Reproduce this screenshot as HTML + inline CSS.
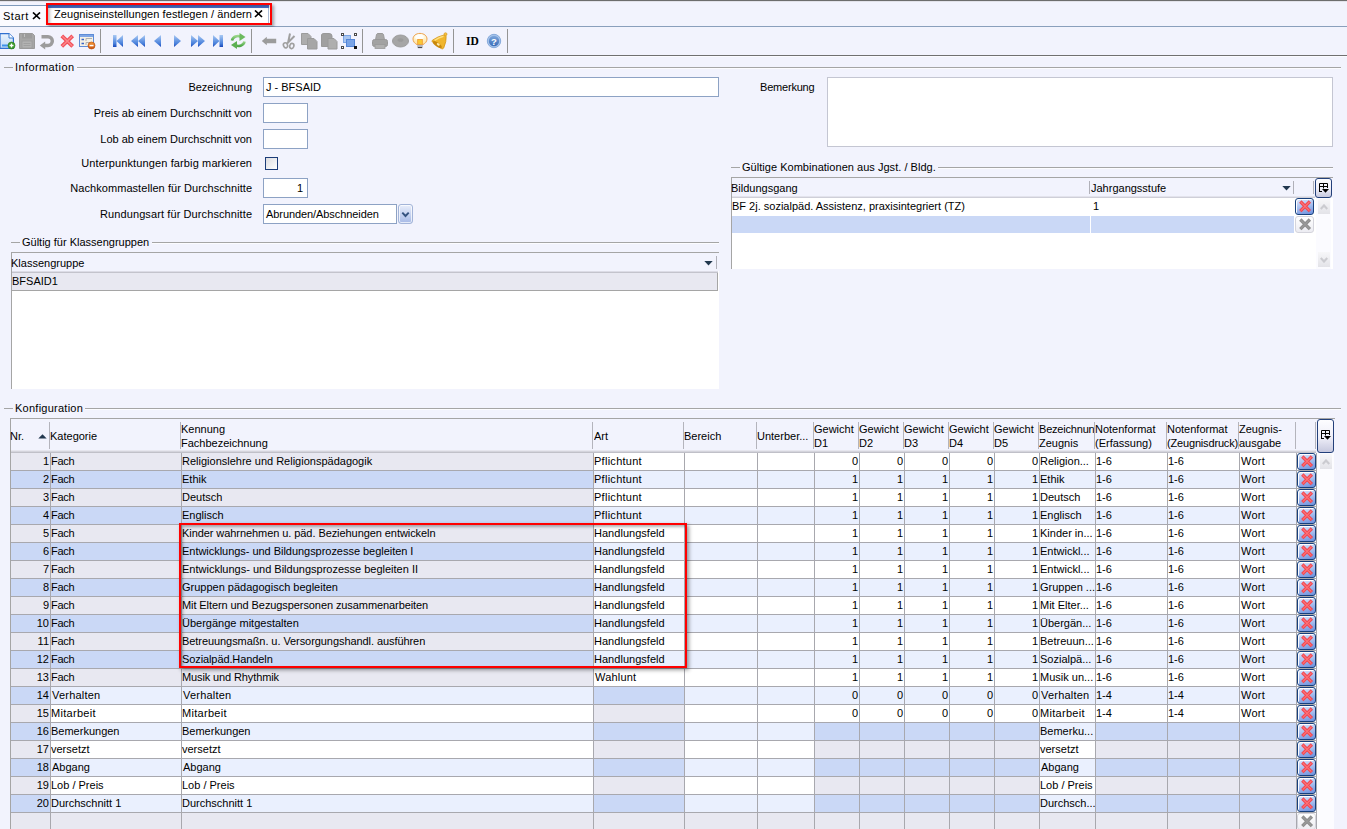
<!DOCTYPE html>
<html lang="de"><head><meta charset="utf-8"><title>Zeugniseinstellungen festlegen / ändern</title><style>
html,body{margin:0;padding:0}
body{width:1347px;height:829px;overflow:hidden;position:relative;background:#f2f3fd;font-family:"Liberation Sans",sans-serif;font-size:11px;color:#000}
.b{position:absolute;display:block}
.t{position:absolute;white-space:nowrap;line-height:13px;height:13px}
</style></head><body>
<div class="b" style="left:0px;top:0px;width:1347px;height:1px;background:#6d6d6d"></div>
<div class="b" style="left:0px;top:1px;width:1347px;height:1px;background:#e2e2ea"></div>
<div class="b" style="left:0px;top:2px;width:1347px;height:24px;background:#f2f3fd"></div>
<div class="b" style="left:0px;top:5px;width:46px;height:1px;background:#7f9abb"></div>
<div class="b" style="left:0px;top:6px;width:46px;height:20px;background:#fbfbff"></div>
<div class="b" style="left:0px;top:26px;width:1347px;height:1px;background:#8a9fbc"></div>
<div class="t " style="left:3px;top:10px;letter-spacing:0.5px;">Start</div>
<svg class="b" style="left:32px;top:12px" width="9" height="8" viewBox="0 0 9 8"><path d="M1 0.5 L8 7 M8 0.5 L1 7" stroke="#000" stroke-width="1.7" fill="none"/></svg>
<div class="b" style="left:48px;top:5px;width:222px;height:18px;background:#fff"></div>
<div class="b" style="left:48px;top:5px;width:221px;height:3px;background:#4a6fcb"></div>
<div class="b" style="left:268px;top:8px;width:1px;height:15px;background:#a9bcd6"></div>
<div class="t " style="left:54px;top:8px;letter-spacing:0.075px;">Zeugniseinstellungen festlegen / ändern</div>
<svg class="b" style="left:254px;top:10px" width="9" height="8" viewBox="0 0 9 8"><path d="M1 0.5 L8 7 M8 0.5 L1 7" stroke="#000" stroke-width="1.7" fill="none"/></svg>
<div class="b" style="left:46px;top:3px;width:226px;height:22px;box-sizing:border-box;border:2px solid #f00;box-shadow:2px 2px 3px rgba(0,0,0,.35), inset 2px 2px 3px rgba(0,0,0,.25)"></div>
<div class="b" style="left:0px;top:27px;width:1347px;height:28px;background:#f2f3fd"></div>
<div class="b" style="left:0px;top:56px;width:1347px;height:1px;background:#fbfbff"></div>
<div class="b" style="left:0px;top:55px;width:1347px;height:1px;background:#707070"></div>
<div class="b" style="left:100px;top:29px;width:1px;height:24px;background:#949494"></div>
<div class="b" style="left:251px;top:29px;width:1px;height:24px;background:#949494"></div>
<div class="b" style="left:362px;top:29px;width:1px;height:24px;background:#949494"></div>
<div class="b" style="left:453px;top:29px;width:1px;height:24px;background:#949494"></div>
<div class="b" style="left:507px;top:29px;width:1px;height:24px;background:#949494"></div>
<svg class="b" style="left:0;top:27px" width="520" height="28" viewBox="0 27 520 28">
<defs>
<linearGradient id="gb" x1="0" y1="0" x2="0" y2="1"><stop offset="0" stop-color="#a9c9f3"/><stop offset="0.7" stop-color="#4a82dc"/><stop offset="1" stop-color="#1a48ba"/></linearGradient>
<linearGradient id="gp" x1="0" y1="0" x2="0" y2="1"><stop offset="0" stop-color="#eaf3fd"/><stop offset="1" stop-color="#bdd8f6"/></linearGradient>
<linearGradient id="gg" x1="0" y1="0" x2="0" y2="1"><stop offset="0" stop-color="#9ad68a"/><stop offset="1" stop-color="#4fa848"/></linearGradient>
<linearGradient id="gy" x1="0" y1="0" x2="0" y2="1"><stop offset="0" stop-color="#fffdf2"/><stop offset="1" stop-color="#ffe49a"/></linearGradient>
<linearGradient id="gh" x1="0" y1="0" x2="0" y2="1"><stop offset="0" stop-color="#7da6dc"/><stop offset="1" stop-color="#3a6cb8"/></linearGradient>
<linearGradient id="go" x1="0" y1="0" x2="0" y2="1"><stop offset="0" stop-color="#f49a3a"/><stop offset="1" stop-color="#c8500c"/></linearGradient>
</defs>
<!-- new doc -->
<path d="M0 33.6 H9 L13.4 38 V48.4 H0 Z" fill="url(#gp)" stroke="#2f70d0" stroke-width="1.2"/>
<path d="M9 33.5 V38 H13.5" fill="#fff" stroke="#3f7fd0" stroke-width="1"/>
<rect x="2" y="44.5" width="7" height="2" fill="#3f93ea"/>
<circle cx="11.5" cy="45.5" r="3.5" fill="#3a9a28" stroke="#2c7a20" stroke-width=".6"/>
<path d="M9.5 45.5 H13.5 M11.5 43.5 V47.5" stroke="#fff" stroke-width="1.3"/>
<!-- save -->
<path d="M19.5 33.5 H32.5 L34.5 35.5 V48.5 H19.5 Z" fill="#a6a6a6" stroke="#9a9a9a" stroke-width="1"/>
<rect x="22" y="33.5" width="10" height="5" fill="#9c9c9c"/>
<rect x="24" y="34" width="1" height="3" fill="#c0c0c0"/>
<rect x="22" y="41" width="10" height="7" fill="#b2b2b2" stroke="#9c9c9c" stroke-width=".8"/>
<path d="M23.5 43.5 H30.5 M23.5 45.5 H30.5" stroke="#a0a0a0" stroke-width="1"/>
<!-- undo -->
<path d="M41.5 36.8 H48 A4.3 4.3 0 0 1 48 45.4 H44.5" fill="none" stroke="#9c9c9c" stroke-width="3.5"/>
<path d="M39.8 45.4 L45.2 41.4 V49.4 Z" fill="#9c9c9c"/>
<!-- delete X -->
<path d="M61.8 35.8 L72.7 46.4 M72.7 35.8 L61.8 46.4" stroke="#f2505a" stroke-width="3.8" fill="none"/>
<path d="M62.3 36.3 L72.2 45.9 M72.2 36.3 L62.3 45.9" stroke="#ff9c9c" stroke-width="1.4" fill="none" opacity=".7"/>
<!-- form icon -->
<rect x="79.5" y="34.5" width="14" height="12" fill="#f4f1e6" stroke="#5e8cd6" stroke-width="1"/>
<rect x="80" y="35" width="13" height="2" fill="#7fa6e6"/>
<path d="M81.500 39.500 H84 M81.500 43.500 H84" stroke="#3a66c8" stroke-width="1.4"/>
<path d="M86 41 V38.500 H92 M86 45 V42.500 H90" stroke="#b0b0b0" stroke-width="1" fill="none"/>
<circle cx="91.500" cy="45.500" r="3.500" fill="url(#go)" stroke="#b84a08" stroke-width=".6"/>
<rect x="89.500" y="44.800" width="4" height="1.500" fill="#fff"/>
<!-- first -->
<rect x="113" y="35" width="3.500" height="12" fill="url(#gb)"/>
<path d="M123 35 V47 L116.500 41 Z" fill="url(#gb)"/>
<!-- prev prev -->
<path d="M138 35 V47 L131 41 Z M145 35 V47 L138 41 Z" fill="url(#gb)"/>
<!-- prev -->
<path d="M161 35 V47 L154 41 Z" fill="url(#gb)"/>
<!-- next -->
<path d="M174 35 V47 L181 41 Z" fill="url(#gb)"/>
<!-- next next -->
<path d="M191 35 V47 L198 41 Z M198 35 V47 L205 41 Z" fill="url(#gb)"/>
<!-- last -->
<path d="M213 35 V47 L219.500 41 Z" fill="url(#gb)"/>
<rect x="219.500" y="35" width="3.500" height="12" fill="url(#gb)"/>
<!-- refresh -->
<path d="M232 40.500 A6 5.500 0 0 1 241 36.800" fill="none" stroke="url(#gg)" stroke-width="2.600"/>
<path d="M239.500 33 L245.500 37 L239.500 41 Z" fill="#6cba5e"/>
<path d="M244.500 41.500 A6 5.500 0 0 1 235.500 45.200" fill="none" stroke="url(#gg)" stroke-width="2.600"/>
<path d="M237 41 L231 45 L237 49 Z" fill="#5cb052"/>
<!-- arrow left -->
<path d="M261.8 41 L266.8 36.8 V38.8 H276.2 V43.2 H266.8 V45.2 Z" fill="#9c9c9c"/>
<!-- scissors -->
<path d="M290 33.500 L288 43 M294.500 36 L287 43.500" stroke="#a0a0a0" stroke-width="2" fill="none"/>
<ellipse cx="285.500" cy="45.300" rx="2" ry="2.600" fill="none" stroke="#a0a0a0" stroke-width="1.600" transform="rotate(-25 285.5 45.3)"/>
<ellipse cx="291.800" cy="46" rx="2" ry="2.600" fill="none" stroke="#a0a0a0" stroke-width="1.600" transform="rotate(20 291.8 46)"/>
<!-- copy -->
<path d="M301.500 33.500 H308 L311 36.500 V44.500 H301.500 Z" fill="#adadad" stroke="#9c9c9c" stroke-width="1"/>
<path d="M307.500 38.500 H314 L317 41.500 V49 H307.500 Z" fill="#a6a6a6" stroke="#9a9a9a" stroke-width="1"/>
<!-- paste -->
<path d="M321.500 35 Q321.500 33.500 324 33.500 H329 Q332 33.500 332 36 V46.500 H321.500 Z" fill="#a0a0a0" stroke="#999" stroke-width="1"/>
<path d="M328 38.500 H334 L337 41.500 V49 H328 Z" fill="#aeaeae" stroke="#9a9a9a" stroke-width="1"/>
<!-- select -->
<rect x="343.500" y="35.500" width="7" height="7" fill="#a9c6f0" stroke="#7aa4e4" stroke-width="1"/>
<rect x="346.500" y="39.500" width="8" height="7" fill="#7aa4e6" stroke="#5586d8" stroke-width="1"/>
<rect x="341.500" y="33.500" width="2" height="2" fill="#fff" stroke="#4a4a4a" stroke-width="1"/>
<rect x="354.500" y="33.500" width="2" height="2" fill="#fff" stroke="#4a4a4a" stroke-width="1"/>
<rect x="341.500" y="46.500" width="2" height="2" fill="#fff" stroke="#4a4a4a" stroke-width="1"/>
<rect x="354.500" y="46.500" width="2" height="2" fill="#111" stroke="#111" stroke-width="1"/>
<!-- print -->
<path d="M375.500 40 L376.500 34.500 Q377 33.500 378 33.500 H382 Q383 33.500 383.500 34.500 L384.500 40 Z" fill="#a8a8a8" stroke="#9a9a9a" stroke-width="1"/>
<rect x="372.500" y="39.500" width="15" height="7" rx="2" fill="#a2a2a2" stroke="#989898" stroke-width="1"/>
<rect x="375" y="44.500" width="10" height="4" fill="#b0b0b0" stroke="#9a9a9a" stroke-width=".8"/>
<!-- oval -->
<ellipse cx="400.500" cy="41" rx="8" ry="6" fill="#a6a6a6" stroke="#9c9c9c" stroke-width="1"/>
<ellipse cx="400.500" cy="40" rx="3" ry="1.800" fill="#9a9a9a"/>
<!-- bulb -->
<path d="M420 33.4 C424.2 33.4 427 36 427 39 C427 41.600 425.200 43.400 423 44.600 H417 C414.800 43.400 413 41.600 413 39 C413 36 415.800 33.400 420 33.400 Z" fill="url(#gy)" stroke="#eea24c" stroke-width="1"/>
<ellipse cx="419.500" cy="37.200" rx="4.200" ry="2.600" fill="#ffffff" opacity=".85"/>
<rect x="417.700" y="39.500" width="4.600" height="5" fill="#fac832" stroke="#f0982c" stroke-width=".8"/>
<rect x="417.200" y="44.800" width="5.600" height="2.400" fill="#b4b8c0"/>
<rect x="417.800" y="47" width="4.400" height="1.100" fill="#4a4a4a"/>
<!-- bell -->
<path d="M444.3 34.9 Q438 36.2 432.4 40.2 Q431.5 41.2 432.5 42.1 L441.4 48.6 Q442.8 49.4 443.7 48 Q446.6 41 446.1 36.6 Q445.6 35 444.3 34.9 Z" fill="#f0b62e" stroke="#d49414" stroke-width=".8"/>
<path d="M443.5 36.2 Q439 37.3 434.6 40.4" stroke="#ffe38a" stroke-width="1.400" fill="none" opacity=".9"/>
<ellipse cx="437.300" cy="44.600" rx="5.300" ry="1.900" fill="#c8880c" transform="rotate(36 437.3 44.6)"/>
<ellipse cx="438.300" cy="44.300" rx="1.700" ry="1.100" fill="#ffe9a6" transform="rotate(36 438.3 44.3)"/>
<circle cx="445.500" cy="34.200" r="1.500" fill="#f4c040" stroke="#d49414" stroke-width=".6"/>
<!-- ID -->
<text x="466" y="45" font-family="Liberation Serif, serif" font-weight="bold" font-size="11.500" fill="#000">ID</text>
<!-- help -->
<circle cx="494" cy="41" r="6.700" fill="#a9c5ea" stroke="#86aadc" stroke-width="1"/><circle cx="494" cy="41" r="5.200" fill="url(#gh)"/>
<text x="494" y="44.500" text-anchor="middle" font-family="Liberation Sans, sans-serif" font-weight="bold" font-size="9.500" fill="#fff">?</text>
</svg>

<div class="b" style="left:4px;top:67px;width:9px;height:1px;background:#a5a5a5"></div>
<div class="b" style="left:77px;top:67px;width:1264px;height:1px;background:#a5a5a5"></div>
<div class="b" style="left:77px;top:68px;width:1264px;height:1px;background:#fcfcff"></div>
<div class="t " style="left:15px;top:61px;letter-spacing:0.4px;">Information</div>
<div class="b" style="left:11px;top:242px;width:9px;height:1px;background:#a5a5a5"></div>
<div class="b" style="left:152px;top:242px;width:567px;height:1px;background:#a5a5a5"></div>
<div class="b" style="left:152px;top:243px;width:567px;height:1px;background:#fcfcff"></div>
<div class="t " style="left:22px;top:236px;">Gültig für Klassengruppen</div>
<div class="b" style="left:731px;top:167px;width:9px;height:1px;background:#a5a5a5"></div>
<div class="b" style="left:938px;top:167px;width:395px;height:1px;background:#a5a5a5"></div>
<div class="b" style="left:938px;top:168px;width:395px;height:1px;background:#fcfcff"></div>
<div class="t " style="left:742px;top:161px;letter-spacing:0.03px;">Gültige Kombinationen aus Jgst. / Bldg.</div>
<div class="b" style="left:4px;top:408px;width:9px;height:1px;background:#a5a5a5"></div>
<div class="b" style="left:85px;top:408px;width:1256px;height:1px;background:#a5a5a5"></div>
<div class="b" style="left:85px;top:409px;width:1256px;height:1px;background:#fcfcff"></div>
<div class="t " style="left:15px;top:402px;letter-spacing:0.25px;">Konfiguration</div>
<div class="t " style="right:1095px;top:81px;">Bezeichnung</div>
<div class="t " style="right:1095px;top:107px;">Preis ab einem Durchschnitt von</div>
<div class="t " style="right:1095px;top:133px;">Lob ab einem Durchschnitt von</div>
<div class="t " style="right:1094.875px;top:157px;letter-spacing:0.125px;">Unterpunktungen farbig markieren</div>
<div class="t " style="right:1094.94px;top:182px;letter-spacing:0.06px;">Nachkommastellen für Durchschnitte</div>
<div class="t " style="right:1094.9px;top:208px;letter-spacing:0.1px;">Rundungsart für Durchschnitte</div>
<div class="b" style="left:263px;top:77px;width:456px;height:20px;box-sizing:border-box;border:1px solid #8da2c4;background:#fff"></div>
<div class="t " style="left:266px;top:81px;">J - BFSAID</div>
<div class="b" style="left:263px;top:103px;width:45px;height:20px;box-sizing:border-box;border:1px solid #8da2c4;background:#fff"></div>
<div class="b" style="left:263px;top:129px;width:45px;height:20px;box-sizing:border-box;border:1px solid #8da2c4;background:#fff"></div>
<div class="b" style="left:265px;top:157px;width:13px;height:13px;box-sizing:border-box;border:1px solid #1c3c78;background:linear-gradient(135deg,#dcdce0,#ffffff)"></div>
<div class="b" style="left:263px;top:178px;width:45px;height:20px;box-sizing:border-box;border:1px solid #8da2c4;background:#fff"></div>
<div class="t " style="right:1044px;top:182px;">1</div>
<div class="b" style="left:263px;top:204px;width:134px;height:20px;box-sizing:border-box;border:1px solid #8da2c4;background:#fff"></div>
<div class="t " style="left:266px;top:208px;letter-spacing:-0.08px;">Abrunden/Abschneiden</div>
<div class="b" style="left:398px;top:204px;width:15px;height:20px;box-sizing:border-box;border:1px solid #a3b4d8;border-radius:3px;box-shadow:inset 0 0 0 1px rgba(255,255,255,.7);background:linear-gradient(#e9eefb,#a6b9e6)"></div>
<svg class="b" style="left:401px;top:211px" width="9" height="7" viewBox="0 0 9 7"><path d="M1.3 1.6 L4.5 5 L7.7 1.6" stroke="#34527f" stroke-width="1.9" fill="none"/></svg>
<div class="t " style="left:760px;top:81px;letter-spacing:-0.2px;">Bemerkung</div>
<div class="b" style="left:827px;top:77px;width:506px;height:70px;box-sizing:border-box;border:1px solid #c4c6d2;background:#fff"></div>
<div class="b" style="left:11px;top:252px;width:708px;height:137px;background:#fff"></div>
<div class="b" style="left:11px;top:252px;width:708px;height:1px;background:#a5a5a5"></div>
<div class="b" style="left:11px;top:253px;width:1px;height:136px;background:#a5a5a5"></div>
<div class="b" style="left:12px;top:253px;width:707px;height:18px;background:#f2f3fd"></div>
<div class="b" style="left:12px;top:271px;width:706px;height:1px;background:#dcdce6"></div>
<div class="b" style="left:12px;top:272px;width:706px;height:1px;background:#c3c3cc"></div>
<div class="b" style="left:12px;top:273px;width:706px;height:17px;background:#e8e8f1"></div>
<div class="b" style="left:12px;top:290px;width:706px;height:1px;background:#a5a5a5"></div>
<div class="b" style="left:717px;top:273px;width:1px;height:18px;background:#a5a5a5"></div>
<div class="b" style="left:716px;top:256px;width:1px;height:13px;background:#b0b0b8"></div>
<div class="t " style="left:11px;top:257px;">Klassengruppe</div>
<div class="t " style="left:12px;top:275px;">BFSAID1</div>
<svg class="b" style="left:704px;top:261px" width="9" height="5" viewBox="0 0 9 5"><path d="M0.3 0 H8.7 L4.5 4.4 Z" fill="#22384f"/></svg>
<div class="b" style="left:731px;top:177px;width:602px;height:92px;background:#fff"></div>
<div class="b" style="left:731px;top:177px;width:602px;height:1px;background:#a5a5a5"></div>
<div class="b" style="left:731px;top:178px;width:1px;height:91px;background:#a5a5a5"></div>
<div class="b" style="left:732px;top:178px;width:583px;height:19px;background:#f2f3fd"></div>
<div class="b" style="left:732px;top:196px;width:583px;height:1px;background:#e3e3ec"></div>
<div class="b" style="left:732px;top:197px;width:583px;height:1px;background:#cfcfd8"></div>
<div class="b" style="left:1315px;top:178px;width:18px;height:20px;background:#f2f3fd"></div>
<div class="t " style="left:731px;top:182px;">Bildungsgang</div>
<div class="t " style="left:1091px;top:182px;">Jahrgangsstufe</div>
<div class="b" style="left:1089px;top:181px;width:1px;height:13px;background:#b0b0b8"></div>
<div class="b" style="left:1293px;top:181px;width:1px;height:13px;background:#b0b0b8"></div>
<div class="b" style="left:1313px;top:181px;width:1px;height:13px;background:#b0b0b8"></div>
<svg class="b" style="left:1282px;top:186px" width="9" height="5" viewBox="0 0 9 5"><path d="M0.3 0 H8.7 L4.5 4.4 Z" fill="#22384f"/></svg>
<div class="t " style="left:732px;top:200px;">BF 2j. sozialpäd. Assistenz, praxisintegriert (TZ)</div>
<div class="t " style="left:1093px;top:200px;">1</div>
<div class="b" style="left:732px;top:216px;width:358px;height:17px;background:#cad8f6"></div>
<div class="b" style="left:1091px;top:216px;width:203px;height:17px;background:#cad8f6"></div>
<div class="b" style="left:1316px;top:198px;width:15px;height:71px;background:#fbfbff"></div>
<div class="b" style="left:1318px;top:199px;width:12px;height:15px;background:linear-gradient(#f7f7f9,#e3e3e8)"></div>
<div class="b" style="left:1318px;top:252px;width:12px;height:15px;background:linear-gradient(#f7f7f9,#e3e3e8)"></div>
<svg class="b" style="left:1320px;top:204px" width="8" height="6" viewBox="0 0 8 6"><path d="M0.7 5 L4 1.5 L7.3 5" stroke="#cbcbd0" stroke-width="2.2" fill="none"/></svg>
<svg class="b" style="left:1320px;top:257px" width="8" height="6" viewBox="0 0 8 6"><path d="M0.7 1 L4 4.5 L7.3 1" stroke="#cbcbd0" stroke-width="2.2" fill="none"/></svg>
<div class="b" style="left:1315px;top:178px;width:17px;height:20px;box-sizing:border-box;border:1px solid #23407a;border-radius:3px;background:linear-gradient(#fdfdff,#eeeef8 55%,#c6c8de)"></div>
<svg class="b" style="left:1319px;top:183px" width="10" height="10" viewBox="0 0 10 10"><path d="M0.5 9 V0.5 H8.5 V5 M0.5 3.5 H8.5 M4.5 0.5 V5.5 M0.5 8.5 H3" stroke="#000" stroke-width="1" fill="none"/><path d="M3 6 H10 L6.5 9.8 Z" fill="#000"/></svg>
<div class="b" style="left:1295px;top:198px;width:19px;height:17px;box-sizing:border-box;border:1px solid #17407c;border-radius:3px;box-shadow:inset 1px 1px 0 rgba(255,255,255,.95);background:linear-gradient(165deg,#dfe8fc,#adc3f0 45%,#6a8edb)"></div>
<svg class="b" style="left:1298px;top:199px" width="14" height="14" viewBox="0 0 14 14"><path d="M2.3 2.5 L11.9 12.1 M11.9 2.5 L2.3 12.1" stroke="#f4454f" stroke-width="3.3" fill="none"/><path d="M2.8 3 L11.4 11.6 M11.4 3 L2.8 11.6" stroke="#ff9a9a" stroke-width="1.1" fill="none" opacity=".55"/></svg>
<div class="b" style="left:1295px;top:216px;width:19px;height:17px;box-sizing:border-box;border:1px solid #d4d4dc;border-radius:3px;background:linear-gradient(#ffffff,#ececf2)"></div>
<svg class="b" style="left:1298px;top:217px" width="14" height="14" viewBox="0 0 14 14"><path d="M2.3 2.5 L11.9 12.1 M11.9 2.5 L2.3 12.1" stroke="#8e8e8e" stroke-width="3.3" fill="none"/><path d="M2.8 3 L11.4 11.6 M11.4 3 L2.8 11.6" stroke="#a4a4a4" stroke-width="1.1" fill="none" opacity=".55"/></svg>
<div class="b" style="left:10px;top:418px;width:1325px;height:1px;background:#a5a5a5"></div>
<div class="b" style="left:10px;top:419px;width:1px;height:410px;background:#a5a5a5"></div>
<div class="b" style="left:11px;top:419px;width:1305px;height:31px;background:#f2f3fd"></div>
<div class="b" style="left:11px;top:450px;width:1305px;height:1px;background:#e6e6ee"></div>
<div class="b" style="left:11px;top:451px;width:1305px;height:1px;background:#d4d4dc"></div>
<div class="b" style="left:11px;top:452px;width:1305px;height:1px;background:#c0c0c8"></div>
<div class="b" style="left:1317px;top:453px;width:17px;height:376px;background:#fcfcff"></div>
<div class="b" style="left:1320px;top:454px;width:12px;height:15px;background:linear-gradient(#f7f7f9,#e3e3e8)"></div>
<svg class="b" style="left:1322px;top:459px" width="8" height="6" viewBox="0 0 8 6"><path d="M0.7 5 L4 1.5 L7.3 5" stroke="#cbcbd0" stroke-width="2.2" fill="none"/></svg>
<div class="b" style="left:1317px;top:419px;width:17px;height:34px;box-sizing:border-box;border:1px solid #23407a;border-radius:3px;background:linear-gradient(#fdfdff,#eeeef8 55%,#c6c8de)"></div>
<svg class="b" style="left:1321px;top:430px" width="10" height="10" viewBox="0 0 10 10"><path d="M0.5 9 V0.5 H8.5 V5 M0.5 3.5 H8.5 M4.5 0.5 V5.5 M0.5 8.5 H3" stroke="#000" stroke-width="1" fill="none"/><path d="M3 6 H10 L6.5 9.8 Z" fill="#000"/></svg>
<div class="t" style="left:10px;top:430px;width:39px;overflow:hidden">Nr.</div>
<div class="b" style="left:49px;top:422px;width:1px;height:27px;background:#b4b4bc"></div>
<div class="t" style="left:50px;top:430px;width:130px;overflow:hidden">Kategorie</div>
<div class="b" style="left:180px;top:422px;width:1px;height:27px;background:#b4b4bc"></div>
<div class="t" style="left:181px;top:422px;width:411px;height:28px;overflow:hidden;line-height:14px">Kennung<br>Fachbezeichnung</div>
<div class="b" style="left:592px;top:422px;width:1px;height:27px;background:#b4b4bc"></div>
<div class="t" style="left:594px;top:430px;width:90px;overflow:hidden">Art</div>
<div class="b" style="left:683px;top:422px;width:1px;height:27px;background:#b4b4bc"></div>
<div class="t" style="left:684px;top:430px;width:72px;overflow:hidden">Bereich</div>
<div class="b" style="left:756px;top:422px;width:1px;height:27px;background:#b4b4bc"></div>
<div class="t" style="left:757px;top:430px;width:56px;overflow:hidden">Unterber...</div>
<div class="b" style="left:813px;top:422px;width:1px;height:27px;background:#b4b4bc"></div>
<div class="t" style="left:814px;top:422px;width:44px;height:28px;overflow:hidden;line-height:14px">Gewicht<br>D1</div>
<div class="b" style="left:858px;top:422px;width:1px;height:27px;background:#b4b4bc"></div>
<div class="t" style="left:859px;top:422px;width:44px;height:28px;overflow:hidden;line-height:14px">Gewicht<br>D2</div>
<div class="b" style="left:903px;top:422px;width:1px;height:27px;background:#b4b4bc"></div>
<div class="t" style="left:904px;top:422px;width:44px;height:28px;overflow:hidden;line-height:14px">Gewicht<br>D3</div>
<div class="b" style="left:948px;top:422px;width:1px;height:27px;background:#b4b4bc"></div>
<div class="t" style="left:949px;top:422px;width:44px;height:28px;overflow:hidden;line-height:14px">Gewicht<br>D4</div>
<div class="b" style="left:993px;top:422px;width:1px;height:27px;background:#b4b4bc"></div>
<div class="t" style="left:994px;top:422px;width:44px;height:28px;overflow:hidden;line-height:14px">Gewicht<br>D5</div>
<div class="b" style="left:1038px;top:422px;width:1px;height:27px;background:#b4b4bc"></div>
<div class="t" style="left:1039px;top:422px;width:55px;height:28px;overflow:hidden;line-height:14px"><span style="letter-spacing:-0.2px">Bezeichnung</span><br>Zeugnis</div>
<div class="b" style="left:1094px;top:422px;width:1px;height:27px;background:#b4b4bc"></div>
<div class="t" style="left:1095px;top:422px;width:71px;height:28px;overflow:hidden;line-height:14px">Notenformat<br>(Erfassung)</div>
<div class="b" style="left:1166px;top:422px;width:1px;height:27px;background:#b4b4bc"></div>
<div class="t" style="left:1167px;top:422px;width:71px;height:28px;overflow:hidden;line-height:14px">Notenformat<br><span style="letter-spacing:-0.17px">(Zeugnisdruck)</span></div>
<div class="b" style="left:1238px;top:422px;width:1px;height:27px;background:#b4b4bc"></div>
<div class="t" style="left:1239px;top:422px;width:56px;height:28px;overflow:hidden;line-height:14px">Zeugnis-<br>ausgabe</div>
<div class="b" style="left:1295px;top:422px;width:1px;height:27px;background:#b4b4bc"></div>
<div class="b" style="left:1315px;top:422px;width:1px;height:27px;background:#b4b4bc"></div>
<svg class="b" style="left:38px;top:434px" width="9" height="5" viewBox="0 0 9 5"><path d="M0.3 4.6 H8.7 L4.5 0.2 Z" fill="#22384f"/></svg>
<div class="b" style="left:11px;top:453px;width:39px;height:17px;background:#e8e8f1"></div>
<div class="t " style="right:1298px;top:455px;">1</div>
<div class="b" style="left:51px;top:453px;width:130px;height:17px;background:#e8e8f1"></div>
<div class="t " style="left:51px;top:455px;letter-spacing:-0.25px;">Fach</div>
<div class="b" style="left:182px;top:453px;width:411px;height:17px;background:#e8e8f1"></div>
<div class="t " style="left:182px;top:455px;">Religionslehre und Religionspädagogik</div>
<div class="b" style="left:594px;top:453px;width:90px;height:17px;background:#ffffff"></div>
<div class="t " style="left:594px;top:455px;letter-spacing:0.27px;">Pflichtunt</div>
<div class="b" style="left:685px;top:453px;width:72px;height:17px;background:#ffffff"></div>
<div class="b" style="left:758px;top:453px;width:56px;height:17px;background:#ffffff"></div>
<div class="b" style="left:815px;top:453px;width:44px;height:17px;background:#ffffff"></div>
<div class="t " style="right:489px;top:455px;">0</div>
<div class="b" style="left:860px;top:453px;width:44px;height:17px;background:#ffffff"></div>
<div class="t " style="right:444px;top:455px;">0</div>
<div class="b" style="left:905px;top:453px;width:44px;height:17px;background:#ffffff"></div>
<div class="t " style="right:399px;top:455px;">0</div>
<div class="b" style="left:950px;top:453px;width:44px;height:17px;background:#ffffff"></div>
<div class="t " style="right:354px;top:455px;">0</div>
<div class="b" style="left:995px;top:453px;width:44px;height:17px;background:#ffffff"></div>
<div class="t " style="right:309px;top:455px;">0</div>
<div class="b" style="left:1040px;top:453px;width:55px;height:17px;background:#ffffff"></div>
<div class="t " style="left:1040px;top:455px;">Religion...</div>
<div class="b" style="left:1096px;top:453px;width:71px;height:17px;background:#ffffff"></div>
<div class="t " style="left:1096px;top:455px;">1-6</div>
<div class="b" style="left:1168px;top:453px;width:71px;height:17px;background:#ffffff"></div>
<div class="t " style="left:1168px;top:455px;">1-6</div>
<div class="b" style="left:1240px;top:453px;width:56px;height:17px;background:#ffffff"></div>
<div class="t " style="left:1241px;top:455px;letter-spacing:0.25px;">Wort</div>
<div class="b" style="left:1297px;top:453px;width:19px;height:17px;background:#fff"></div>
<div class="b" style="left:11px;top:470px;width:1306px;height:1px;background:#a8a8ae"></div>
<div class="b" style="left:1297px;top:453px;width:19px;height:17px;box-sizing:border-box;border:1px solid #17407c;border-radius:3px;box-shadow:inset 1px 1px 0 rgba(255,255,255,.95);background:linear-gradient(165deg,#dfe8fc,#adc3f0 45%,#6a8edb)"></div>
<svg class="b" style="left:1300px;top:454px" width="14" height="14" viewBox="0 0 14 14"><path d="M2.3 2.5 L11.9 12.1 M11.9 2.5 L2.3 12.1" stroke="#f4454f" stroke-width="3.3" fill="none"/><path d="M2.8 3 L11.4 11.6 M11.4 3 L2.8 11.6" stroke="#ff9a9a" stroke-width="1.1" fill="none" opacity=".55"/></svg>
<div class="b" style="left:11px;top:471px;width:39px;height:17px;background:#cad8f6"></div>
<div class="t " style="right:1298px;top:473px;">2</div>
<div class="b" style="left:51px;top:471px;width:130px;height:17px;background:#cad8f6"></div>
<div class="t " style="left:51px;top:473px;letter-spacing:-0.25px;">Fach</div>
<div class="b" style="left:182px;top:471px;width:411px;height:17px;background:#cad8f6"></div>
<div class="t " style="left:182px;top:473px;">Ethik</div>
<div class="b" style="left:594px;top:471px;width:90px;height:17px;background:#eaf0fe"></div>
<div class="t " style="left:594px;top:473px;letter-spacing:0.27px;">Pflichtunt</div>
<div class="b" style="left:685px;top:471px;width:72px;height:17px;background:#eaf0fe"></div>
<div class="b" style="left:758px;top:471px;width:56px;height:17px;background:#eaf0fe"></div>
<div class="b" style="left:815px;top:471px;width:44px;height:17px;background:#eaf0fe"></div>
<div class="t " style="right:489px;top:473px;">1</div>
<div class="b" style="left:860px;top:471px;width:44px;height:17px;background:#eaf0fe"></div>
<div class="t " style="right:444px;top:473px;">1</div>
<div class="b" style="left:905px;top:471px;width:44px;height:17px;background:#eaf0fe"></div>
<div class="t " style="right:399px;top:473px;">1</div>
<div class="b" style="left:950px;top:471px;width:44px;height:17px;background:#eaf0fe"></div>
<div class="t " style="right:354px;top:473px;">1</div>
<div class="b" style="left:995px;top:471px;width:44px;height:17px;background:#eaf0fe"></div>
<div class="t " style="right:309px;top:473px;">1</div>
<div class="b" style="left:1040px;top:471px;width:55px;height:17px;background:#eaf0fe"></div>
<div class="t " style="left:1040px;top:473px;">Ethik</div>
<div class="b" style="left:1096px;top:471px;width:71px;height:17px;background:#eaf0fe"></div>
<div class="t " style="left:1096px;top:473px;">1-6</div>
<div class="b" style="left:1168px;top:471px;width:71px;height:17px;background:#eaf0fe"></div>
<div class="t " style="left:1168px;top:473px;">1-6</div>
<div class="b" style="left:1240px;top:471px;width:56px;height:17px;background:#eaf0fe"></div>
<div class="t " style="left:1241px;top:473px;letter-spacing:0.25px;">Wort</div>
<div class="b" style="left:1297px;top:471px;width:19px;height:17px;background:#fff"></div>
<div class="b" style="left:11px;top:488px;width:1306px;height:1px;background:#a8a8ae"></div>
<div class="b" style="left:1297px;top:471px;width:19px;height:17px;box-sizing:border-box;border:1px solid #17407c;border-radius:3px;box-shadow:inset 1px 1px 0 rgba(255,255,255,.95);background:linear-gradient(165deg,#dfe8fc,#adc3f0 45%,#6a8edb)"></div>
<svg class="b" style="left:1300px;top:472px" width="14" height="14" viewBox="0 0 14 14"><path d="M2.3 2.5 L11.9 12.1 M11.9 2.5 L2.3 12.1" stroke="#f4454f" stroke-width="3.3" fill="none"/><path d="M2.8 3 L11.4 11.6 M11.4 3 L2.8 11.6" stroke="#ff9a9a" stroke-width="1.1" fill="none" opacity=".55"/></svg>
<div class="b" style="left:11px;top:489px;width:39px;height:17px;background:#e8e8f1"></div>
<div class="t " style="right:1298px;top:491px;">3</div>
<div class="b" style="left:51px;top:489px;width:130px;height:17px;background:#e8e8f1"></div>
<div class="t " style="left:51px;top:491px;letter-spacing:-0.25px;">Fach</div>
<div class="b" style="left:182px;top:489px;width:411px;height:17px;background:#e8e8f1"></div>
<div class="t " style="left:182px;top:491px;">Deutsch</div>
<div class="b" style="left:594px;top:489px;width:90px;height:17px;background:#ffffff"></div>
<div class="t " style="left:594px;top:491px;letter-spacing:0.27px;">Pflichtunt</div>
<div class="b" style="left:685px;top:489px;width:72px;height:17px;background:#ffffff"></div>
<div class="b" style="left:758px;top:489px;width:56px;height:17px;background:#ffffff"></div>
<div class="b" style="left:815px;top:489px;width:44px;height:17px;background:#ffffff"></div>
<div class="t " style="right:489px;top:491px;">1</div>
<div class="b" style="left:860px;top:489px;width:44px;height:17px;background:#ffffff"></div>
<div class="t " style="right:444px;top:491px;">1</div>
<div class="b" style="left:905px;top:489px;width:44px;height:17px;background:#ffffff"></div>
<div class="t " style="right:399px;top:491px;">1</div>
<div class="b" style="left:950px;top:489px;width:44px;height:17px;background:#ffffff"></div>
<div class="t " style="right:354px;top:491px;">1</div>
<div class="b" style="left:995px;top:489px;width:44px;height:17px;background:#ffffff"></div>
<div class="t " style="right:309px;top:491px;">1</div>
<div class="b" style="left:1040px;top:489px;width:55px;height:17px;background:#ffffff"></div>
<div class="t " style="left:1040px;top:491px;">Deutsch</div>
<div class="b" style="left:1096px;top:489px;width:71px;height:17px;background:#ffffff"></div>
<div class="t " style="left:1096px;top:491px;">1-6</div>
<div class="b" style="left:1168px;top:489px;width:71px;height:17px;background:#ffffff"></div>
<div class="t " style="left:1168px;top:491px;">1-6</div>
<div class="b" style="left:1240px;top:489px;width:56px;height:17px;background:#ffffff"></div>
<div class="t " style="left:1241px;top:491px;letter-spacing:0.25px;">Wort</div>
<div class="b" style="left:1297px;top:489px;width:19px;height:17px;background:#fff"></div>
<div class="b" style="left:11px;top:506px;width:1306px;height:1px;background:#a8a8ae"></div>
<div class="b" style="left:1297px;top:489px;width:19px;height:17px;box-sizing:border-box;border:1px solid #17407c;border-radius:3px;box-shadow:inset 1px 1px 0 rgba(255,255,255,.95);background:linear-gradient(165deg,#dfe8fc,#adc3f0 45%,#6a8edb)"></div>
<svg class="b" style="left:1300px;top:490px" width="14" height="14" viewBox="0 0 14 14"><path d="M2.3 2.5 L11.9 12.1 M11.9 2.5 L2.3 12.1" stroke="#f4454f" stroke-width="3.3" fill="none"/><path d="M2.8 3 L11.4 11.6 M11.4 3 L2.8 11.6" stroke="#ff9a9a" stroke-width="1.1" fill="none" opacity=".55"/></svg>
<div class="b" style="left:11px;top:507px;width:39px;height:17px;background:#cad8f6"></div>
<div class="t " style="right:1298px;top:509px;">4</div>
<div class="b" style="left:51px;top:507px;width:130px;height:17px;background:#cad8f6"></div>
<div class="t " style="left:51px;top:509px;letter-spacing:-0.25px;">Fach</div>
<div class="b" style="left:182px;top:507px;width:411px;height:17px;background:#cad8f6"></div>
<div class="t " style="left:182px;top:509px;">Englisch</div>
<div class="b" style="left:594px;top:507px;width:90px;height:17px;background:#eaf0fe"></div>
<div class="t " style="left:594px;top:509px;letter-spacing:0.27px;">Pflichtunt</div>
<div class="b" style="left:685px;top:507px;width:72px;height:17px;background:#eaf0fe"></div>
<div class="b" style="left:758px;top:507px;width:56px;height:17px;background:#eaf0fe"></div>
<div class="b" style="left:815px;top:507px;width:44px;height:17px;background:#eaf0fe"></div>
<div class="t " style="right:489px;top:509px;">1</div>
<div class="b" style="left:860px;top:507px;width:44px;height:17px;background:#eaf0fe"></div>
<div class="t " style="right:444px;top:509px;">1</div>
<div class="b" style="left:905px;top:507px;width:44px;height:17px;background:#eaf0fe"></div>
<div class="t " style="right:399px;top:509px;">1</div>
<div class="b" style="left:950px;top:507px;width:44px;height:17px;background:#eaf0fe"></div>
<div class="t " style="right:354px;top:509px;">1</div>
<div class="b" style="left:995px;top:507px;width:44px;height:17px;background:#eaf0fe"></div>
<div class="t " style="right:309px;top:509px;">1</div>
<div class="b" style="left:1040px;top:507px;width:55px;height:17px;background:#eaf0fe"></div>
<div class="t " style="left:1040px;top:509px;">Englisch</div>
<div class="b" style="left:1096px;top:507px;width:71px;height:17px;background:#eaf0fe"></div>
<div class="t " style="left:1096px;top:509px;">1-6</div>
<div class="b" style="left:1168px;top:507px;width:71px;height:17px;background:#eaf0fe"></div>
<div class="t " style="left:1168px;top:509px;">1-6</div>
<div class="b" style="left:1240px;top:507px;width:56px;height:17px;background:#eaf0fe"></div>
<div class="t " style="left:1241px;top:509px;letter-spacing:0.25px;">Wort</div>
<div class="b" style="left:1297px;top:507px;width:19px;height:17px;background:#fff"></div>
<div class="b" style="left:11px;top:524px;width:1306px;height:1px;background:#a8a8ae"></div>
<div class="b" style="left:1297px;top:507px;width:19px;height:17px;box-sizing:border-box;border:1px solid #17407c;border-radius:3px;box-shadow:inset 1px 1px 0 rgba(255,255,255,.95);background:linear-gradient(165deg,#dfe8fc,#adc3f0 45%,#6a8edb)"></div>
<svg class="b" style="left:1300px;top:508px" width="14" height="14" viewBox="0 0 14 14"><path d="M2.3 2.5 L11.9 12.1 M11.9 2.5 L2.3 12.1" stroke="#f4454f" stroke-width="3.3" fill="none"/><path d="M2.8 3 L11.4 11.6 M11.4 3 L2.8 11.6" stroke="#ff9a9a" stroke-width="1.1" fill="none" opacity=".55"/></svg>
<div class="b" style="left:11px;top:525px;width:39px;height:17px;background:#e8e8f1"></div>
<div class="t " style="right:1298px;top:527px;">5</div>
<div class="b" style="left:51px;top:525px;width:130px;height:17px;background:#e8e8f1"></div>
<div class="t " style="left:51px;top:527px;letter-spacing:-0.25px;">Fach</div>
<div class="b" style="left:182px;top:525px;width:411px;height:17px;background:#e8e8f1"></div>
<div class="t " style="left:182px;top:527px;letter-spacing:-0.07px;">Kinder wahrnehmen u. päd. Beziehungen entwickeln</div>
<div class="b" style="left:594px;top:525px;width:90px;height:17px;background:#ffffff"></div>
<div class="t " style="left:594px;top:527px;letter-spacing:0.03px;">Handlungsfeld</div>
<div class="b" style="left:685px;top:525px;width:72px;height:17px;background:#ffffff"></div>
<div class="b" style="left:758px;top:525px;width:56px;height:17px;background:#ffffff"></div>
<div class="b" style="left:815px;top:525px;width:44px;height:17px;background:#ffffff"></div>
<div class="t " style="right:489px;top:527px;">1</div>
<div class="b" style="left:860px;top:525px;width:44px;height:17px;background:#ffffff"></div>
<div class="t " style="right:444px;top:527px;">1</div>
<div class="b" style="left:905px;top:525px;width:44px;height:17px;background:#ffffff"></div>
<div class="t " style="right:399px;top:527px;">1</div>
<div class="b" style="left:950px;top:525px;width:44px;height:17px;background:#ffffff"></div>
<div class="t " style="right:354px;top:527px;">1</div>
<div class="b" style="left:995px;top:525px;width:44px;height:17px;background:#ffffff"></div>
<div class="t " style="right:309px;top:527px;">1</div>
<div class="b" style="left:1040px;top:525px;width:55px;height:17px;background:#ffffff"></div>
<div class="t " style="left:1040px;top:527px;">Kinder in...</div>
<div class="b" style="left:1096px;top:525px;width:71px;height:17px;background:#ffffff"></div>
<div class="t " style="left:1096px;top:527px;">1-6</div>
<div class="b" style="left:1168px;top:525px;width:71px;height:17px;background:#ffffff"></div>
<div class="t " style="left:1168px;top:527px;">1-6</div>
<div class="b" style="left:1240px;top:525px;width:56px;height:17px;background:#ffffff"></div>
<div class="t " style="left:1241px;top:527px;letter-spacing:0.25px;">Wort</div>
<div class="b" style="left:1297px;top:525px;width:19px;height:17px;background:#fff"></div>
<div class="b" style="left:11px;top:542px;width:1306px;height:1px;background:#a8a8ae"></div>
<div class="b" style="left:1297px;top:525px;width:19px;height:17px;box-sizing:border-box;border:1px solid #17407c;border-radius:3px;box-shadow:inset 1px 1px 0 rgba(255,255,255,.95);background:linear-gradient(165deg,#dfe8fc,#adc3f0 45%,#6a8edb)"></div>
<svg class="b" style="left:1300px;top:526px" width="14" height="14" viewBox="0 0 14 14"><path d="M2.3 2.5 L11.9 12.1 M11.9 2.5 L2.3 12.1" stroke="#f4454f" stroke-width="3.3" fill="none"/><path d="M2.8 3 L11.4 11.6 M11.4 3 L2.8 11.6" stroke="#ff9a9a" stroke-width="1.1" fill="none" opacity=".55"/></svg>
<div class="b" style="left:11px;top:543px;width:39px;height:17px;background:#cad8f6"></div>
<div class="t " style="right:1298px;top:545px;">6</div>
<div class="b" style="left:51px;top:543px;width:130px;height:17px;background:#cad8f6"></div>
<div class="t " style="left:51px;top:545px;letter-spacing:-0.25px;">Fach</div>
<div class="b" style="left:182px;top:543px;width:411px;height:17px;background:#cad8f6"></div>
<div class="t " style="left:182px;top:545px;letter-spacing:-0.035px;">Entwicklungs- und Bildungsprozesse begleiten I</div>
<div class="b" style="left:594px;top:543px;width:90px;height:17px;background:#eaf0fe"></div>
<div class="t " style="left:594px;top:545px;letter-spacing:0.03px;">Handlungsfeld</div>
<div class="b" style="left:685px;top:543px;width:72px;height:17px;background:#eaf0fe"></div>
<div class="b" style="left:758px;top:543px;width:56px;height:17px;background:#eaf0fe"></div>
<div class="b" style="left:815px;top:543px;width:44px;height:17px;background:#eaf0fe"></div>
<div class="t " style="right:489px;top:545px;">1</div>
<div class="b" style="left:860px;top:543px;width:44px;height:17px;background:#eaf0fe"></div>
<div class="t " style="right:444px;top:545px;">1</div>
<div class="b" style="left:905px;top:543px;width:44px;height:17px;background:#eaf0fe"></div>
<div class="t " style="right:399px;top:545px;">1</div>
<div class="b" style="left:950px;top:543px;width:44px;height:17px;background:#eaf0fe"></div>
<div class="t " style="right:354px;top:545px;">1</div>
<div class="b" style="left:995px;top:543px;width:44px;height:17px;background:#eaf0fe"></div>
<div class="t " style="right:309px;top:545px;">1</div>
<div class="b" style="left:1040px;top:543px;width:55px;height:17px;background:#eaf0fe"></div>
<div class="t " style="left:1040px;top:545px;">Entwickl...</div>
<div class="b" style="left:1096px;top:543px;width:71px;height:17px;background:#eaf0fe"></div>
<div class="t " style="left:1096px;top:545px;">1-6</div>
<div class="b" style="left:1168px;top:543px;width:71px;height:17px;background:#eaf0fe"></div>
<div class="t " style="left:1168px;top:545px;">1-6</div>
<div class="b" style="left:1240px;top:543px;width:56px;height:17px;background:#eaf0fe"></div>
<div class="t " style="left:1241px;top:545px;letter-spacing:0.25px;">Wort</div>
<div class="b" style="left:1297px;top:543px;width:19px;height:17px;background:#fff"></div>
<div class="b" style="left:11px;top:560px;width:1306px;height:1px;background:#a8a8ae"></div>
<div class="b" style="left:1297px;top:543px;width:19px;height:17px;box-sizing:border-box;border:1px solid #17407c;border-radius:3px;box-shadow:inset 1px 1px 0 rgba(255,255,255,.95);background:linear-gradient(165deg,#dfe8fc,#adc3f0 45%,#6a8edb)"></div>
<svg class="b" style="left:1300px;top:544px" width="14" height="14" viewBox="0 0 14 14"><path d="M2.3 2.5 L11.9 12.1 M11.9 2.5 L2.3 12.1" stroke="#f4454f" stroke-width="3.3" fill="none"/><path d="M2.8 3 L11.4 11.6 M11.4 3 L2.8 11.6" stroke="#ff9a9a" stroke-width="1.1" fill="none" opacity=".55"/></svg>
<div class="b" style="left:11px;top:561px;width:39px;height:17px;background:#e8e8f1"></div>
<div class="t " style="right:1298px;top:563px;">7</div>
<div class="b" style="left:51px;top:561px;width:130px;height:17px;background:#e8e8f1"></div>
<div class="t " style="left:51px;top:563px;letter-spacing:-0.25px;">Fach</div>
<div class="b" style="left:182px;top:561px;width:411px;height:17px;background:#e8e8f1"></div>
<div class="t " style="left:182px;top:563px;">Entwicklungs- und Bildungsprozesse begleiten II</div>
<div class="b" style="left:594px;top:561px;width:90px;height:17px;background:#ffffff"></div>
<div class="t " style="left:594px;top:563px;letter-spacing:0.03px;">Handlungsfeld</div>
<div class="b" style="left:685px;top:561px;width:72px;height:17px;background:#ffffff"></div>
<div class="b" style="left:758px;top:561px;width:56px;height:17px;background:#ffffff"></div>
<div class="b" style="left:815px;top:561px;width:44px;height:17px;background:#ffffff"></div>
<div class="t " style="right:489px;top:563px;">1</div>
<div class="b" style="left:860px;top:561px;width:44px;height:17px;background:#ffffff"></div>
<div class="t " style="right:444px;top:563px;">1</div>
<div class="b" style="left:905px;top:561px;width:44px;height:17px;background:#ffffff"></div>
<div class="t " style="right:399px;top:563px;">1</div>
<div class="b" style="left:950px;top:561px;width:44px;height:17px;background:#ffffff"></div>
<div class="t " style="right:354px;top:563px;">1</div>
<div class="b" style="left:995px;top:561px;width:44px;height:17px;background:#ffffff"></div>
<div class="t " style="right:309px;top:563px;">1</div>
<div class="b" style="left:1040px;top:561px;width:55px;height:17px;background:#ffffff"></div>
<div class="t " style="left:1040px;top:563px;">Entwickl...</div>
<div class="b" style="left:1096px;top:561px;width:71px;height:17px;background:#ffffff"></div>
<div class="t " style="left:1096px;top:563px;">1-6</div>
<div class="b" style="left:1168px;top:561px;width:71px;height:17px;background:#ffffff"></div>
<div class="t " style="left:1168px;top:563px;">1-6</div>
<div class="b" style="left:1240px;top:561px;width:56px;height:17px;background:#ffffff"></div>
<div class="t " style="left:1241px;top:563px;letter-spacing:0.25px;">Wort</div>
<div class="b" style="left:1297px;top:561px;width:19px;height:17px;background:#fff"></div>
<div class="b" style="left:11px;top:578px;width:1306px;height:1px;background:#a8a8ae"></div>
<div class="b" style="left:1297px;top:561px;width:19px;height:17px;box-sizing:border-box;border:1px solid #17407c;border-radius:3px;box-shadow:inset 1px 1px 0 rgba(255,255,255,.95);background:linear-gradient(165deg,#dfe8fc,#adc3f0 45%,#6a8edb)"></div>
<svg class="b" style="left:1300px;top:562px" width="14" height="14" viewBox="0 0 14 14"><path d="M2.3 2.5 L11.9 12.1 M11.9 2.5 L2.3 12.1" stroke="#f4454f" stroke-width="3.3" fill="none"/><path d="M2.8 3 L11.4 11.6 M11.4 3 L2.8 11.6" stroke="#ff9a9a" stroke-width="1.1" fill="none" opacity=".55"/></svg>
<div class="b" style="left:11px;top:579px;width:39px;height:17px;background:#cad8f6"></div>
<div class="t " style="right:1298px;top:581px;">8</div>
<div class="b" style="left:51px;top:579px;width:130px;height:17px;background:#cad8f6"></div>
<div class="t " style="left:51px;top:581px;letter-spacing:-0.25px;">Fach</div>
<div class="b" style="left:182px;top:579px;width:411px;height:17px;background:#cad8f6"></div>
<div class="t " style="left:182px;top:581px;">Gruppen pädagogisch begleiten</div>
<div class="b" style="left:594px;top:579px;width:90px;height:17px;background:#eaf0fe"></div>
<div class="t " style="left:594px;top:581px;letter-spacing:0.03px;">Handlungsfeld</div>
<div class="b" style="left:685px;top:579px;width:72px;height:17px;background:#eaf0fe"></div>
<div class="b" style="left:758px;top:579px;width:56px;height:17px;background:#eaf0fe"></div>
<div class="b" style="left:815px;top:579px;width:44px;height:17px;background:#eaf0fe"></div>
<div class="t " style="right:489px;top:581px;">1</div>
<div class="b" style="left:860px;top:579px;width:44px;height:17px;background:#eaf0fe"></div>
<div class="t " style="right:444px;top:581px;">1</div>
<div class="b" style="left:905px;top:579px;width:44px;height:17px;background:#eaf0fe"></div>
<div class="t " style="right:399px;top:581px;">1</div>
<div class="b" style="left:950px;top:579px;width:44px;height:17px;background:#eaf0fe"></div>
<div class="t " style="right:354px;top:581px;">1</div>
<div class="b" style="left:995px;top:579px;width:44px;height:17px;background:#eaf0fe"></div>
<div class="t " style="right:309px;top:581px;">1</div>
<div class="b" style="left:1040px;top:579px;width:55px;height:17px;background:#eaf0fe"></div>
<div class="t " style="left:1040px;top:581px;">Gruppen ...</div>
<div class="b" style="left:1096px;top:579px;width:71px;height:17px;background:#eaf0fe"></div>
<div class="t " style="left:1096px;top:581px;">1-6</div>
<div class="b" style="left:1168px;top:579px;width:71px;height:17px;background:#eaf0fe"></div>
<div class="t " style="left:1168px;top:581px;">1-6</div>
<div class="b" style="left:1240px;top:579px;width:56px;height:17px;background:#eaf0fe"></div>
<div class="t " style="left:1241px;top:581px;letter-spacing:0.25px;">Wort</div>
<div class="b" style="left:1297px;top:579px;width:19px;height:17px;background:#fff"></div>
<div class="b" style="left:11px;top:596px;width:1306px;height:1px;background:#a8a8ae"></div>
<div class="b" style="left:1297px;top:579px;width:19px;height:17px;box-sizing:border-box;border:1px solid #17407c;border-radius:3px;box-shadow:inset 1px 1px 0 rgba(255,255,255,.95);background:linear-gradient(165deg,#dfe8fc,#adc3f0 45%,#6a8edb)"></div>
<svg class="b" style="left:1300px;top:580px" width="14" height="14" viewBox="0 0 14 14"><path d="M2.3 2.5 L11.9 12.1 M11.9 2.5 L2.3 12.1" stroke="#f4454f" stroke-width="3.3" fill="none"/><path d="M2.8 3 L11.4 11.6 M11.4 3 L2.8 11.6" stroke="#ff9a9a" stroke-width="1.1" fill="none" opacity=".55"/></svg>
<div class="b" style="left:11px;top:597px;width:39px;height:17px;background:#e8e8f1"></div>
<div class="t " style="right:1298px;top:599px;">9</div>
<div class="b" style="left:51px;top:597px;width:130px;height:17px;background:#e8e8f1"></div>
<div class="t " style="left:51px;top:599px;letter-spacing:-0.25px;">Fach</div>
<div class="b" style="left:182px;top:597px;width:411px;height:17px;background:#e8e8f1"></div>
<div class="t " style="left:182px;top:599px;letter-spacing:-0.087px;">Mit Eltern und Bezugspersonen zusammenarbeiten</div>
<div class="b" style="left:594px;top:597px;width:90px;height:17px;background:#ffffff"></div>
<div class="t " style="left:594px;top:599px;letter-spacing:0.03px;">Handlungsfeld</div>
<div class="b" style="left:685px;top:597px;width:72px;height:17px;background:#ffffff"></div>
<div class="b" style="left:758px;top:597px;width:56px;height:17px;background:#ffffff"></div>
<div class="b" style="left:815px;top:597px;width:44px;height:17px;background:#ffffff"></div>
<div class="t " style="right:489px;top:599px;">1</div>
<div class="b" style="left:860px;top:597px;width:44px;height:17px;background:#ffffff"></div>
<div class="t " style="right:444px;top:599px;">1</div>
<div class="b" style="left:905px;top:597px;width:44px;height:17px;background:#ffffff"></div>
<div class="t " style="right:399px;top:599px;">1</div>
<div class="b" style="left:950px;top:597px;width:44px;height:17px;background:#ffffff"></div>
<div class="t " style="right:354px;top:599px;">1</div>
<div class="b" style="left:995px;top:597px;width:44px;height:17px;background:#ffffff"></div>
<div class="t " style="right:309px;top:599px;">1</div>
<div class="b" style="left:1040px;top:597px;width:55px;height:17px;background:#ffffff"></div>
<div class="t " style="left:1040px;top:599px;">Mit Elter...</div>
<div class="b" style="left:1096px;top:597px;width:71px;height:17px;background:#ffffff"></div>
<div class="t " style="left:1096px;top:599px;">1-6</div>
<div class="b" style="left:1168px;top:597px;width:71px;height:17px;background:#ffffff"></div>
<div class="t " style="left:1168px;top:599px;">1-6</div>
<div class="b" style="left:1240px;top:597px;width:56px;height:17px;background:#ffffff"></div>
<div class="t " style="left:1241px;top:599px;letter-spacing:0.25px;">Wort</div>
<div class="b" style="left:1297px;top:597px;width:19px;height:17px;background:#fff"></div>
<div class="b" style="left:11px;top:614px;width:1306px;height:1px;background:#a8a8ae"></div>
<div class="b" style="left:1297px;top:597px;width:19px;height:17px;box-sizing:border-box;border:1px solid #17407c;border-radius:3px;box-shadow:inset 1px 1px 0 rgba(255,255,255,.95);background:linear-gradient(165deg,#dfe8fc,#adc3f0 45%,#6a8edb)"></div>
<svg class="b" style="left:1300px;top:598px" width="14" height="14" viewBox="0 0 14 14"><path d="M2.3 2.5 L11.9 12.1 M11.9 2.5 L2.3 12.1" stroke="#f4454f" stroke-width="3.3" fill="none"/><path d="M2.8 3 L11.4 11.6 M11.4 3 L2.8 11.6" stroke="#ff9a9a" stroke-width="1.1" fill="none" opacity=".55"/></svg>
<div class="b" style="left:11px;top:615px;width:39px;height:17px;background:#cad8f6"></div>
<div class="t " style="right:1298px;top:617px;">10</div>
<div class="b" style="left:51px;top:615px;width:130px;height:17px;background:#cad8f6"></div>
<div class="t " style="left:51px;top:617px;letter-spacing:-0.25px;">Fach</div>
<div class="b" style="left:182px;top:615px;width:411px;height:17px;background:#cad8f6"></div>
<div class="t " style="left:182px;top:617px;">Übergänge mitgestalten</div>
<div class="b" style="left:594px;top:615px;width:90px;height:17px;background:#eaf0fe"></div>
<div class="t " style="left:594px;top:617px;letter-spacing:0.03px;">Handlungsfeld</div>
<div class="b" style="left:685px;top:615px;width:72px;height:17px;background:#eaf0fe"></div>
<div class="b" style="left:758px;top:615px;width:56px;height:17px;background:#eaf0fe"></div>
<div class="b" style="left:815px;top:615px;width:44px;height:17px;background:#eaf0fe"></div>
<div class="t " style="right:489px;top:617px;">1</div>
<div class="b" style="left:860px;top:615px;width:44px;height:17px;background:#eaf0fe"></div>
<div class="t " style="right:444px;top:617px;">1</div>
<div class="b" style="left:905px;top:615px;width:44px;height:17px;background:#eaf0fe"></div>
<div class="t " style="right:399px;top:617px;">1</div>
<div class="b" style="left:950px;top:615px;width:44px;height:17px;background:#eaf0fe"></div>
<div class="t " style="right:354px;top:617px;">1</div>
<div class="b" style="left:995px;top:615px;width:44px;height:17px;background:#eaf0fe"></div>
<div class="t " style="right:309px;top:617px;">1</div>
<div class="b" style="left:1040px;top:615px;width:55px;height:17px;background:#eaf0fe"></div>
<div class="t " style="left:1040px;top:617px;">Übergän...</div>
<div class="b" style="left:1096px;top:615px;width:71px;height:17px;background:#eaf0fe"></div>
<div class="t " style="left:1096px;top:617px;">1-6</div>
<div class="b" style="left:1168px;top:615px;width:71px;height:17px;background:#eaf0fe"></div>
<div class="t " style="left:1168px;top:617px;">1-6</div>
<div class="b" style="left:1240px;top:615px;width:56px;height:17px;background:#eaf0fe"></div>
<div class="t " style="left:1241px;top:617px;letter-spacing:0.25px;">Wort</div>
<div class="b" style="left:1297px;top:615px;width:19px;height:17px;background:#fff"></div>
<div class="b" style="left:11px;top:632px;width:1306px;height:1px;background:#a8a8ae"></div>
<div class="b" style="left:1297px;top:615px;width:19px;height:17px;box-sizing:border-box;border:1px solid #17407c;border-radius:3px;box-shadow:inset 1px 1px 0 rgba(255,255,255,.95);background:linear-gradient(165deg,#dfe8fc,#adc3f0 45%,#6a8edb)"></div>
<svg class="b" style="left:1300px;top:616px" width="14" height="14" viewBox="0 0 14 14"><path d="M2.3 2.5 L11.9 12.1 M11.9 2.5 L2.3 12.1" stroke="#f4454f" stroke-width="3.3" fill="none"/><path d="M2.8 3 L11.4 11.6 M11.4 3 L2.8 11.6" stroke="#ff9a9a" stroke-width="1.1" fill="none" opacity=".55"/></svg>
<div class="b" style="left:11px;top:633px;width:39px;height:17px;background:#e8e8f1"></div>
<div class="t " style="right:1298px;top:635px;">11</div>
<div class="b" style="left:51px;top:633px;width:130px;height:17px;background:#e8e8f1"></div>
<div class="t " style="left:51px;top:635px;letter-spacing:-0.25px;">Fach</div>
<div class="b" style="left:182px;top:633px;width:411px;height:17px;background:#e8e8f1"></div>
<div class="t " style="left:182px;top:635px;letter-spacing:-0.07px;">Betreuungsmaßn. u. Versorgungshandl. ausführen</div>
<div class="b" style="left:594px;top:633px;width:90px;height:17px;background:#ffffff"></div>
<div class="t " style="left:594px;top:635px;letter-spacing:0.03px;">Handlungsfeld</div>
<div class="b" style="left:685px;top:633px;width:72px;height:17px;background:#ffffff"></div>
<div class="b" style="left:758px;top:633px;width:56px;height:17px;background:#ffffff"></div>
<div class="b" style="left:815px;top:633px;width:44px;height:17px;background:#ffffff"></div>
<div class="t " style="right:489px;top:635px;">1</div>
<div class="b" style="left:860px;top:633px;width:44px;height:17px;background:#ffffff"></div>
<div class="t " style="right:444px;top:635px;">1</div>
<div class="b" style="left:905px;top:633px;width:44px;height:17px;background:#ffffff"></div>
<div class="t " style="right:399px;top:635px;">1</div>
<div class="b" style="left:950px;top:633px;width:44px;height:17px;background:#ffffff"></div>
<div class="t " style="right:354px;top:635px;">1</div>
<div class="b" style="left:995px;top:633px;width:44px;height:17px;background:#ffffff"></div>
<div class="t " style="right:309px;top:635px;">1</div>
<div class="b" style="left:1040px;top:633px;width:55px;height:17px;background:#ffffff"></div>
<div class="t " style="left:1040px;top:635px;">Betreuun...</div>
<div class="b" style="left:1096px;top:633px;width:71px;height:17px;background:#ffffff"></div>
<div class="t " style="left:1096px;top:635px;">1-6</div>
<div class="b" style="left:1168px;top:633px;width:71px;height:17px;background:#ffffff"></div>
<div class="t " style="left:1168px;top:635px;">1-6</div>
<div class="b" style="left:1240px;top:633px;width:56px;height:17px;background:#ffffff"></div>
<div class="t " style="left:1241px;top:635px;letter-spacing:0.25px;">Wort</div>
<div class="b" style="left:1297px;top:633px;width:19px;height:17px;background:#fff"></div>
<div class="b" style="left:11px;top:650px;width:1306px;height:1px;background:#a8a8ae"></div>
<div class="b" style="left:1297px;top:633px;width:19px;height:17px;box-sizing:border-box;border:1px solid #17407c;border-radius:3px;box-shadow:inset 1px 1px 0 rgba(255,255,255,.95);background:linear-gradient(165deg,#dfe8fc,#adc3f0 45%,#6a8edb)"></div>
<svg class="b" style="left:1300px;top:634px" width="14" height="14" viewBox="0 0 14 14"><path d="M2.3 2.5 L11.9 12.1 M11.9 2.5 L2.3 12.1" stroke="#f4454f" stroke-width="3.3" fill="none"/><path d="M2.8 3 L11.4 11.6 M11.4 3 L2.8 11.6" stroke="#ff9a9a" stroke-width="1.1" fill="none" opacity=".55"/></svg>
<div class="b" style="left:11px;top:651px;width:39px;height:17px;background:#cad8f6"></div>
<div class="t " style="right:1298px;top:653px;">12</div>
<div class="b" style="left:51px;top:651px;width:130px;height:17px;background:#cad8f6"></div>
<div class="t " style="left:51px;top:653px;letter-spacing:-0.25px;">Fach</div>
<div class="b" style="left:182px;top:651px;width:411px;height:17px;background:#cad8f6"></div>
<div class="t " style="left:182px;top:653px;letter-spacing:-0.1px;">Sozialpäd.Handeln</div>
<div class="b" style="left:594px;top:651px;width:90px;height:17px;background:#eaf0fe"></div>
<div class="t " style="left:594px;top:653px;letter-spacing:0.03px;">Handlungsfeld</div>
<div class="b" style="left:685px;top:651px;width:72px;height:17px;background:#eaf0fe"></div>
<div class="b" style="left:758px;top:651px;width:56px;height:17px;background:#eaf0fe"></div>
<div class="b" style="left:815px;top:651px;width:44px;height:17px;background:#eaf0fe"></div>
<div class="t " style="right:489px;top:653px;">1</div>
<div class="b" style="left:860px;top:651px;width:44px;height:17px;background:#eaf0fe"></div>
<div class="t " style="right:444px;top:653px;">1</div>
<div class="b" style="left:905px;top:651px;width:44px;height:17px;background:#eaf0fe"></div>
<div class="t " style="right:399px;top:653px;">1</div>
<div class="b" style="left:950px;top:651px;width:44px;height:17px;background:#eaf0fe"></div>
<div class="t " style="right:354px;top:653px;">1</div>
<div class="b" style="left:995px;top:651px;width:44px;height:17px;background:#eaf0fe"></div>
<div class="t " style="right:309px;top:653px;">1</div>
<div class="b" style="left:1040px;top:651px;width:55px;height:17px;background:#eaf0fe"></div>
<div class="t " style="left:1040px;top:653px;">Sozialpä...</div>
<div class="b" style="left:1096px;top:651px;width:71px;height:17px;background:#eaf0fe"></div>
<div class="t " style="left:1096px;top:653px;">1-6</div>
<div class="b" style="left:1168px;top:651px;width:71px;height:17px;background:#eaf0fe"></div>
<div class="t " style="left:1168px;top:653px;">1-6</div>
<div class="b" style="left:1240px;top:651px;width:56px;height:17px;background:#eaf0fe"></div>
<div class="t " style="left:1241px;top:653px;letter-spacing:0.25px;">Wort</div>
<div class="b" style="left:1297px;top:651px;width:19px;height:17px;background:#fff"></div>
<div class="b" style="left:11px;top:668px;width:1306px;height:1px;background:#a8a8ae"></div>
<div class="b" style="left:1297px;top:651px;width:19px;height:17px;box-sizing:border-box;border:1px solid #17407c;border-radius:3px;box-shadow:inset 1px 1px 0 rgba(255,255,255,.95);background:linear-gradient(165deg,#dfe8fc,#adc3f0 45%,#6a8edb)"></div>
<svg class="b" style="left:1300px;top:652px" width="14" height="14" viewBox="0 0 14 14"><path d="M2.3 2.5 L11.9 12.1 M11.9 2.5 L2.3 12.1" stroke="#f4454f" stroke-width="3.3" fill="none"/><path d="M2.8 3 L11.4 11.6 M11.4 3 L2.8 11.6" stroke="#ff9a9a" stroke-width="1.1" fill="none" opacity=".55"/></svg>
<div class="b" style="left:11px;top:669px;width:39px;height:17px;background:#e8e8f1"></div>
<div class="t " style="right:1298px;top:671px;">13</div>
<div class="b" style="left:51px;top:669px;width:130px;height:17px;background:#e8e8f1"></div>
<div class="t " style="left:51px;top:671px;letter-spacing:-0.25px;">Fach</div>
<div class="b" style="left:182px;top:669px;width:411px;height:17px;background:#e8e8f1"></div>
<div class="t " style="left:182px;top:671px;letter-spacing:-0.12px;">Musik und Rhythmik</div>
<div class="b" style="left:594px;top:669px;width:90px;height:17px;background:#ffffff"></div>
<div class="t " style="left:595px;top:671px;letter-spacing:0.2px;">Wahlunt</div>
<div class="b" style="left:685px;top:669px;width:72px;height:17px;background:#ffffff"></div>
<div class="b" style="left:758px;top:669px;width:56px;height:17px;background:#ffffff"></div>
<div class="b" style="left:815px;top:669px;width:44px;height:17px;background:#ffffff"></div>
<div class="t " style="right:489px;top:671px;">1</div>
<div class="b" style="left:860px;top:669px;width:44px;height:17px;background:#ffffff"></div>
<div class="t " style="right:444px;top:671px;">1</div>
<div class="b" style="left:905px;top:669px;width:44px;height:17px;background:#ffffff"></div>
<div class="t " style="right:399px;top:671px;">1</div>
<div class="b" style="left:950px;top:669px;width:44px;height:17px;background:#ffffff"></div>
<div class="t " style="right:354px;top:671px;">1</div>
<div class="b" style="left:995px;top:669px;width:44px;height:17px;background:#ffffff"></div>
<div class="t " style="right:309px;top:671px;">1</div>
<div class="b" style="left:1040px;top:669px;width:55px;height:17px;background:#ffffff"></div>
<div class="t " style="left:1040px;top:671px;">Musik un...</div>
<div class="b" style="left:1096px;top:669px;width:71px;height:17px;background:#ffffff"></div>
<div class="t " style="left:1096px;top:671px;">1-6</div>
<div class="b" style="left:1168px;top:669px;width:71px;height:17px;background:#ffffff"></div>
<div class="t " style="left:1168px;top:671px;">1-6</div>
<div class="b" style="left:1240px;top:669px;width:56px;height:17px;background:#ffffff"></div>
<div class="t " style="left:1241px;top:671px;letter-spacing:0.25px;">Wort</div>
<div class="b" style="left:1297px;top:669px;width:19px;height:17px;background:#fff"></div>
<div class="b" style="left:11px;top:686px;width:1306px;height:1px;background:#a8a8ae"></div>
<div class="b" style="left:1297px;top:669px;width:19px;height:17px;box-sizing:border-box;border:1px solid #17407c;border-radius:3px;box-shadow:inset 1px 1px 0 rgba(255,255,255,.95);background:linear-gradient(165deg,#dfe8fc,#adc3f0 45%,#6a8edb)"></div>
<svg class="b" style="left:1300px;top:670px" width="14" height="14" viewBox="0 0 14 14"><path d="M2.3 2.5 L11.9 12.1 M11.9 2.5 L2.3 12.1" stroke="#f4454f" stroke-width="3.3" fill="none"/><path d="M2.8 3 L11.4 11.6 M11.4 3 L2.8 11.6" stroke="#ff9a9a" stroke-width="1.1" fill="none" opacity=".55"/></svg>
<div class="b" style="left:11px;top:687px;width:39px;height:17px;background:#cad8f6"></div>
<div class="t " style="right:1298px;top:689px;">14</div>
<div class="b" style="left:51px;top:687px;width:130px;height:17px;background:#eaf0fe"></div>
<div class="t " style="left:52px;top:689px;letter-spacing:0.22px;">Verhalten</div>
<div class="b" style="left:182px;top:687px;width:411px;height:17px;background:#eaf0fe"></div>
<div class="t " style="left:183px;top:689px;letter-spacing:0.22px;">Verhalten</div>
<div class="b" style="left:594px;top:687px;width:90px;height:17px;background:#cad8f6"></div>
<div class="b" style="left:685px;top:687px;width:72px;height:17px;background:#eaf0fe"></div>
<div class="b" style="left:758px;top:687px;width:56px;height:17px;background:#eaf0fe"></div>
<div class="b" style="left:815px;top:687px;width:44px;height:17px;background:#eaf0fe"></div>
<div class="t " style="right:489px;top:689px;">0</div>
<div class="b" style="left:860px;top:687px;width:44px;height:17px;background:#eaf0fe"></div>
<div class="t " style="right:444px;top:689px;">0</div>
<div class="b" style="left:905px;top:687px;width:44px;height:17px;background:#eaf0fe"></div>
<div class="t " style="right:399px;top:689px;">0</div>
<div class="b" style="left:950px;top:687px;width:44px;height:17px;background:#eaf0fe"></div>
<div class="t " style="right:354px;top:689px;">0</div>
<div class="b" style="left:995px;top:687px;width:44px;height:17px;background:#eaf0fe"></div>
<div class="t " style="right:309px;top:689px;">0</div>
<div class="b" style="left:1040px;top:687px;width:55px;height:17px;background:#eaf0fe"></div>
<div class="t " style="left:1041px;top:689px;letter-spacing:0.22px;">Verhalten</div>
<div class="b" style="left:1096px;top:687px;width:71px;height:17px;background:#eaf0fe"></div>
<div class="t " style="left:1096px;top:689px;">1-4</div>
<div class="b" style="left:1168px;top:687px;width:71px;height:17px;background:#eaf0fe"></div>
<div class="t " style="left:1168px;top:689px;">1-4</div>
<div class="b" style="left:1240px;top:687px;width:56px;height:17px;background:#eaf0fe"></div>
<div class="t " style="left:1241px;top:689px;letter-spacing:0.25px;">Wort</div>
<div class="b" style="left:1297px;top:687px;width:19px;height:17px;background:#fff"></div>
<div class="b" style="left:11px;top:704px;width:1306px;height:1px;background:#a8a8ae"></div>
<div class="b" style="left:1297px;top:687px;width:19px;height:17px;box-sizing:border-box;border:1px solid #17407c;border-radius:3px;box-shadow:inset 1px 1px 0 rgba(255,255,255,.95);background:linear-gradient(165deg,#dfe8fc,#adc3f0 45%,#6a8edb)"></div>
<svg class="b" style="left:1300px;top:688px" width="14" height="14" viewBox="0 0 14 14"><path d="M2.3 2.5 L11.9 12.1 M11.9 2.5 L2.3 12.1" stroke="#f4454f" stroke-width="3.3" fill="none"/><path d="M2.8 3 L11.4 11.6 M11.4 3 L2.8 11.6" stroke="#ff9a9a" stroke-width="1.1" fill="none" opacity=".55"/></svg>
<div class="b" style="left:11px;top:705px;width:39px;height:17px;background:#e8e8f1"></div>
<div class="t " style="right:1298px;top:707px;">15</div>
<div class="b" style="left:51px;top:705px;width:130px;height:17px;background:#ffffff"></div>
<div class="t " style="left:51px;top:707px;letter-spacing:0.29px;">Mitarbeit</div>
<div class="b" style="left:182px;top:705px;width:411px;height:17px;background:#ffffff"></div>
<div class="t " style="left:182px;top:707px;letter-spacing:0.29px;">Mitarbeit</div>
<div class="b" style="left:594px;top:705px;width:90px;height:17px;background:#e8e8f1"></div>
<div class="b" style="left:685px;top:705px;width:72px;height:17px;background:#ffffff"></div>
<div class="b" style="left:758px;top:705px;width:56px;height:17px;background:#ffffff"></div>
<div class="b" style="left:815px;top:705px;width:44px;height:17px;background:#ffffff"></div>
<div class="t " style="right:489px;top:707px;">0</div>
<div class="b" style="left:860px;top:705px;width:44px;height:17px;background:#ffffff"></div>
<div class="t " style="right:444px;top:707px;">0</div>
<div class="b" style="left:905px;top:705px;width:44px;height:17px;background:#ffffff"></div>
<div class="t " style="right:399px;top:707px;">0</div>
<div class="b" style="left:950px;top:705px;width:44px;height:17px;background:#ffffff"></div>
<div class="t " style="right:354px;top:707px;">0</div>
<div class="b" style="left:995px;top:705px;width:44px;height:17px;background:#ffffff"></div>
<div class="t " style="right:309px;top:707px;">0</div>
<div class="b" style="left:1040px;top:705px;width:55px;height:17px;background:#ffffff"></div>
<div class="t " style="left:1040px;top:707px;letter-spacing:0.29px;">Mitarbeit</div>
<div class="b" style="left:1096px;top:705px;width:71px;height:17px;background:#ffffff"></div>
<div class="t " style="left:1096px;top:707px;">1-4</div>
<div class="b" style="left:1168px;top:705px;width:71px;height:17px;background:#ffffff"></div>
<div class="t " style="left:1168px;top:707px;">1-4</div>
<div class="b" style="left:1240px;top:705px;width:56px;height:17px;background:#ffffff"></div>
<div class="t " style="left:1241px;top:707px;letter-spacing:0.25px;">Wort</div>
<div class="b" style="left:1297px;top:705px;width:19px;height:17px;background:#fff"></div>
<div class="b" style="left:11px;top:722px;width:1306px;height:1px;background:#a8a8ae"></div>
<div class="b" style="left:1297px;top:705px;width:19px;height:17px;box-sizing:border-box;border:1px solid #17407c;border-radius:3px;box-shadow:inset 1px 1px 0 rgba(255,255,255,.95);background:linear-gradient(165deg,#dfe8fc,#adc3f0 45%,#6a8edb)"></div>
<svg class="b" style="left:1300px;top:706px" width="14" height="14" viewBox="0 0 14 14"><path d="M2.3 2.5 L11.9 12.1 M11.9 2.5 L2.3 12.1" stroke="#f4454f" stroke-width="3.3" fill="none"/><path d="M2.8 3 L11.4 11.6 M11.4 3 L2.8 11.6" stroke="#ff9a9a" stroke-width="1.1" fill="none" opacity=".55"/></svg>
<div class="b" style="left:11px;top:723px;width:39px;height:17px;background:#cad8f6"></div>
<div class="t " style="right:1298px;top:725px;">16</div>
<div class="b" style="left:51px;top:723px;width:130px;height:17px;background:#eaf0fe"></div>
<div class="t " style="left:51px;top:725px;">Bemerkungen</div>
<div class="b" style="left:182px;top:723px;width:411px;height:17px;background:#eaf0fe"></div>
<div class="t " style="left:182px;top:725px;">Bemerkungen</div>
<div class="b" style="left:594px;top:723px;width:90px;height:17px;background:#cad8f6"></div>
<div class="b" style="left:685px;top:723px;width:72px;height:17px;background:#eaf0fe"></div>
<div class="b" style="left:758px;top:723px;width:56px;height:17px;background:#eaf0fe"></div>
<div class="b" style="left:815px;top:723px;width:44px;height:17px;background:#cad8f6"></div>
<div class="b" style="left:860px;top:723px;width:44px;height:17px;background:#cad8f6"></div>
<div class="b" style="left:905px;top:723px;width:44px;height:17px;background:#cad8f6"></div>
<div class="b" style="left:950px;top:723px;width:44px;height:17px;background:#cad8f6"></div>
<div class="b" style="left:995px;top:723px;width:44px;height:17px;background:#cad8f6"></div>
<div class="b" style="left:1040px;top:723px;width:55px;height:17px;background:#eaf0fe"></div>
<div class="t " style="left:1040px;top:725px;">Bemerku...</div>
<div class="b" style="left:1096px;top:723px;width:71px;height:17px;background:#cad8f6"></div>
<div class="b" style="left:1168px;top:723px;width:71px;height:17px;background:#cad8f6"></div>
<div class="b" style="left:1240px;top:723px;width:56px;height:17px;background:#cad8f6"></div>
<div class="b" style="left:1297px;top:723px;width:19px;height:17px;background:#fff"></div>
<div class="b" style="left:11px;top:740px;width:1306px;height:1px;background:#a8a8ae"></div>
<div class="b" style="left:1297px;top:723px;width:19px;height:17px;box-sizing:border-box;border:1px solid #17407c;border-radius:3px;box-shadow:inset 1px 1px 0 rgba(255,255,255,.95);background:linear-gradient(165deg,#dfe8fc,#adc3f0 45%,#6a8edb)"></div>
<svg class="b" style="left:1300px;top:724px" width="14" height="14" viewBox="0 0 14 14"><path d="M2.3 2.5 L11.9 12.1 M11.9 2.5 L2.3 12.1" stroke="#f4454f" stroke-width="3.3" fill="none"/><path d="M2.8 3 L11.4 11.6 M11.4 3 L2.8 11.6" stroke="#ff9a9a" stroke-width="1.1" fill="none" opacity=".55"/></svg>
<div class="b" style="left:11px;top:741px;width:39px;height:17px;background:#e8e8f1"></div>
<div class="t " style="right:1298px;top:743px;">17</div>
<div class="b" style="left:51px;top:741px;width:130px;height:17px;background:#ffffff"></div>
<div class="t " style="left:51px;top:743px;">versetzt</div>
<div class="b" style="left:182px;top:741px;width:411px;height:17px;background:#ffffff"></div>
<div class="t " style="left:182px;top:743px;">versetzt</div>
<div class="b" style="left:594px;top:741px;width:90px;height:17px;background:#e8e8f1"></div>
<div class="b" style="left:685px;top:741px;width:72px;height:17px;background:#ffffff"></div>
<div class="b" style="left:758px;top:741px;width:56px;height:17px;background:#ffffff"></div>
<div class="b" style="left:815px;top:741px;width:44px;height:17px;background:#e8e8f1"></div>
<div class="b" style="left:860px;top:741px;width:44px;height:17px;background:#e8e8f1"></div>
<div class="b" style="left:905px;top:741px;width:44px;height:17px;background:#e8e8f1"></div>
<div class="b" style="left:950px;top:741px;width:44px;height:17px;background:#e8e8f1"></div>
<div class="b" style="left:995px;top:741px;width:44px;height:17px;background:#e8e8f1"></div>
<div class="b" style="left:1040px;top:741px;width:55px;height:17px;background:#ffffff"></div>
<div class="t " style="left:1040px;top:743px;">versetzt</div>
<div class="b" style="left:1096px;top:741px;width:71px;height:17px;background:#e8e8f1"></div>
<div class="b" style="left:1168px;top:741px;width:71px;height:17px;background:#e8e8f1"></div>
<div class="b" style="left:1240px;top:741px;width:56px;height:17px;background:#e8e8f1"></div>
<div class="b" style="left:1297px;top:741px;width:19px;height:17px;background:#fff"></div>
<div class="b" style="left:11px;top:758px;width:1306px;height:1px;background:#a8a8ae"></div>
<div class="b" style="left:1297px;top:741px;width:19px;height:17px;box-sizing:border-box;border:1px solid #17407c;border-radius:3px;box-shadow:inset 1px 1px 0 rgba(255,255,255,.95);background:linear-gradient(165deg,#dfe8fc,#adc3f0 45%,#6a8edb)"></div>
<svg class="b" style="left:1300px;top:742px" width="14" height="14" viewBox="0 0 14 14"><path d="M2.3 2.5 L11.9 12.1 M11.9 2.5 L2.3 12.1" stroke="#f4454f" stroke-width="3.3" fill="none"/><path d="M2.8 3 L11.4 11.6 M11.4 3 L2.8 11.6" stroke="#ff9a9a" stroke-width="1.1" fill="none" opacity=".55"/></svg>
<div class="b" style="left:11px;top:759px;width:39px;height:17px;background:#cad8f6"></div>
<div class="t " style="right:1298px;top:761px;">18</div>
<div class="b" style="left:51px;top:759px;width:130px;height:17px;background:#eaf0fe"></div>
<div class="t " style="left:52px;top:761px;">Abgang</div>
<div class="b" style="left:182px;top:759px;width:411px;height:17px;background:#eaf0fe"></div>
<div class="t " style="left:183px;top:761px;">Abgang</div>
<div class="b" style="left:594px;top:759px;width:90px;height:17px;background:#cad8f6"></div>
<div class="b" style="left:685px;top:759px;width:72px;height:17px;background:#eaf0fe"></div>
<div class="b" style="left:758px;top:759px;width:56px;height:17px;background:#eaf0fe"></div>
<div class="b" style="left:815px;top:759px;width:44px;height:17px;background:#cad8f6"></div>
<div class="b" style="left:860px;top:759px;width:44px;height:17px;background:#cad8f6"></div>
<div class="b" style="left:905px;top:759px;width:44px;height:17px;background:#cad8f6"></div>
<div class="b" style="left:950px;top:759px;width:44px;height:17px;background:#cad8f6"></div>
<div class="b" style="left:995px;top:759px;width:44px;height:17px;background:#cad8f6"></div>
<div class="b" style="left:1040px;top:759px;width:55px;height:17px;background:#eaf0fe"></div>
<div class="t " style="left:1041px;top:761px;">Abgang</div>
<div class="b" style="left:1096px;top:759px;width:71px;height:17px;background:#cad8f6"></div>
<div class="b" style="left:1168px;top:759px;width:71px;height:17px;background:#cad8f6"></div>
<div class="b" style="left:1240px;top:759px;width:56px;height:17px;background:#cad8f6"></div>
<div class="b" style="left:1297px;top:759px;width:19px;height:17px;background:#fff"></div>
<div class="b" style="left:11px;top:776px;width:1306px;height:1px;background:#a8a8ae"></div>
<div class="b" style="left:1297px;top:759px;width:19px;height:17px;box-sizing:border-box;border:1px solid #17407c;border-radius:3px;box-shadow:inset 1px 1px 0 rgba(255,255,255,.95);background:linear-gradient(165deg,#dfe8fc,#adc3f0 45%,#6a8edb)"></div>
<svg class="b" style="left:1300px;top:760px" width="14" height="14" viewBox="0 0 14 14"><path d="M2.3 2.5 L11.9 12.1 M11.9 2.5 L2.3 12.1" stroke="#f4454f" stroke-width="3.3" fill="none"/><path d="M2.8 3 L11.4 11.6 M11.4 3 L2.8 11.6" stroke="#ff9a9a" stroke-width="1.1" fill="none" opacity=".55"/></svg>
<div class="b" style="left:11px;top:777px;width:39px;height:17px;background:#e8e8f1"></div>
<div class="t " style="right:1298px;top:779px;">19</div>
<div class="b" style="left:51px;top:777px;width:130px;height:17px;background:#ffffff"></div>
<div class="t " style="left:51px;top:779px;">Lob / Preis</div>
<div class="b" style="left:182px;top:777px;width:411px;height:17px;background:#ffffff"></div>
<div class="t " style="left:182px;top:779px;">Lob / Preis</div>
<div class="b" style="left:594px;top:777px;width:90px;height:17px;background:#e8e8f1"></div>
<div class="b" style="left:685px;top:777px;width:72px;height:17px;background:#ffffff"></div>
<div class="b" style="left:758px;top:777px;width:56px;height:17px;background:#ffffff"></div>
<div class="b" style="left:815px;top:777px;width:44px;height:17px;background:#e8e8f1"></div>
<div class="b" style="left:860px;top:777px;width:44px;height:17px;background:#e8e8f1"></div>
<div class="b" style="left:905px;top:777px;width:44px;height:17px;background:#e8e8f1"></div>
<div class="b" style="left:950px;top:777px;width:44px;height:17px;background:#e8e8f1"></div>
<div class="b" style="left:995px;top:777px;width:44px;height:17px;background:#e8e8f1"></div>
<div class="b" style="left:1040px;top:777px;width:55px;height:17px;background:#ffffff"></div>
<div class="t " style="left:1040px;top:779px;">Lob / Preis</div>
<div class="b" style="left:1096px;top:777px;width:71px;height:17px;background:#e8e8f1"></div>
<div class="b" style="left:1168px;top:777px;width:71px;height:17px;background:#e8e8f1"></div>
<div class="b" style="left:1240px;top:777px;width:56px;height:17px;background:#e8e8f1"></div>
<div class="b" style="left:1297px;top:777px;width:19px;height:17px;background:#fff"></div>
<div class="b" style="left:11px;top:794px;width:1306px;height:1px;background:#a8a8ae"></div>
<div class="b" style="left:1297px;top:777px;width:19px;height:17px;box-sizing:border-box;border:1px solid #17407c;border-radius:3px;box-shadow:inset 1px 1px 0 rgba(255,255,255,.95);background:linear-gradient(165deg,#dfe8fc,#adc3f0 45%,#6a8edb)"></div>
<svg class="b" style="left:1300px;top:778px" width="14" height="14" viewBox="0 0 14 14"><path d="M2.3 2.5 L11.9 12.1 M11.9 2.5 L2.3 12.1" stroke="#f4454f" stroke-width="3.3" fill="none"/><path d="M2.8 3 L11.4 11.6 M11.4 3 L2.8 11.6" stroke="#ff9a9a" stroke-width="1.1" fill="none" opacity=".55"/></svg>
<div class="b" style="left:11px;top:795px;width:39px;height:17px;background:#cad8f6"></div>
<div class="t " style="right:1298px;top:797px;">20</div>
<div class="b" style="left:51px;top:795px;width:130px;height:17px;background:#eaf0fe"></div>
<div class="t " style="left:51px;top:797px;">Durchschnitt 1</div>
<div class="b" style="left:182px;top:795px;width:411px;height:17px;background:#eaf0fe"></div>
<div class="t " style="left:182px;top:797px;">Durchschnitt 1</div>
<div class="b" style="left:594px;top:795px;width:90px;height:17px;background:#cad8f6"></div>
<div class="b" style="left:685px;top:795px;width:72px;height:17px;background:#eaf0fe"></div>
<div class="b" style="left:758px;top:795px;width:56px;height:17px;background:#eaf0fe"></div>
<div class="b" style="left:815px;top:795px;width:44px;height:17px;background:#cad8f6"></div>
<div class="b" style="left:860px;top:795px;width:44px;height:17px;background:#cad8f6"></div>
<div class="b" style="left:905px;top:795px;width:44px;height:17px;background:#cad8f6"></div>
<div class="b" style="left:950px;top:795px;width:44px;height:17px;background:#cad8f6"></div>
<div class="b" style="left:995px;top:795px;width:44px;height:17px;background:#cad8f6"></div>
<div class="b" style="left:1040px;top:795px;width:55px;height:17px;background:#eaf0fe"></div>
<div class="t " style="left:1040px;top:797px;">Durchsch...</div>
<div class="b" style="left:1096px;top:795px;width:71px;height:17px;background:#cad8f6"></div>
<div class="b" style="left:1168px;top:795px;width:71px;height:17px;background:#cad8f6"></div>
<div class="b" style="left:1240px;top:795px;width:56px;height:17px;background:#cad8f6"></div>
<div class="b" style="left:1297px;top:795px;width:19px;height:17px;background:#fff"></div>
<div class="b" style="left:11px;top:812px;width:1306px;height:1px;background:#a8a8ae"></div>
<div class="b" style="left:1297px;top:795px;width:19px;height:17px;box-sizing:border-box;border:1px solid #17407c;border-radius:3px;box-shadow:inset 1px 1px 0 rgba(255,255,255,.95);background:linear-gradient(165deg,#dfe8fc,#adc3f0 45%,#6a8edb)"></div>
<svg class="b" style="left:1300px;top:796px" width="14" height="14" viewBox="0 0 14 14"><path d="M2.3 2.5 L11.9 12.1 M11.9 2.5 L2.3 12.1" stroke="#f4454f" stroke-width="3.3" fill="none"/><path d="M2.8 3 L11.4 11.6 M11.4 3 L2.8 11.6" stroke="#ff9a9a" stroke-width="1.1" fill="none" opacity=".55"/></svg>
<div class="b" style="left:11px;top:813px;width:39px;height:16px;background:#e8e8f1"></div>
<div class="b" style="left:51px;top:813px;width:130px;height:16px;background:#e8e8f1"></div>
<div class="b" style="left:182px;top:813px;width:411px;height:16px;background:#e8e8f1"></div>
<div class="b" style="left:594px;top:813px;width:90px;height:16px;background:#e8e8f1"></div>
<div class="b" style="left:685px;top:813px;width:72px;height:16px;background:#e8e8f1"></div>
<div class="b" style="left:758px;top:813px;width:56px;height:16px;background:#e8e8f1"></div>
<div class="b" style="left:815px;top:813px;width:44px;height:16px;background:#e8e8f1"></div>
<div class="b" style="left:860px;top:813px;width:44px;height:16px;background:#e8e8f1"></div>
<div class="b" style="left:905px;top:813px;width:44px;height:16px;background:#e8e8f1"></div>
<div class="b" style="left:950px;top:813px;width:44px;height:16px;background:#e8e8f1"></div>
<div class="b" style="left:995px;top:813px;width:44px;height:16px;background:#e8e8f1"></div>
<div class="b" style="left:1040px;top:813px;width:55px;height:16px;background:#e8e8f1"></div>
<div class="b" style="left:1096px;top:813px;width:71px;height:16px;background:#e8e8f1"></div>
<div class="b" style="left:1168px;top:813px;width:71px;height:16px;background:#e8e8f1"></div>
<div class="b" style="left:1240px;top:813px;width:56px;height:16px;background:#e8e8f1"></div>
<div class="b" style="left:1297px;top:813px;width:19px;height:16px;background:#fff"></div>
<div class="b" style="left:1297px;top:813px;width:19px;height:17px;box-sizing:border-box;border:1px solid #d4d4dc;border-radius:3px;background:linear-gradient(#ffffff,#ececf2)"></div>
<svg class="b" style="left:1300px;top:814px" width="14" height="14" viewBox="0 0 14 14"><path d="M2.3 2.5 L11.9 12.1 M11.9 2.5 L2.3 12.1" stroke="#8e8e8e" stroke-width="3.3" fill="none"/><path d="M2.8 3 L11.4 11.6 M11.4 3 L2.8 11.6" stroke="#a4a4a4" stroke-width="1.1" fill="none" opacity=".55"/></svg>
<div class="b" style="left:50px;top:453px;width:1px;height:376px;background:#a8a8ae"></div>
<div class="b" style="left:181px;top:453px;width:1px;height:376px;background:#a8a8ae"></div>
<div class="b" style="left:593px;top:453px;width:1px;height:376px;background:#a8a8ae"></div>
<div class="b" style="left:684px;top:453px;width:1px;height:376px;background:#a8a8ae"></div>
<div class="b" style="left:757px;top:453px;width:1px;height:376px;background:#a8a8ae"></div>
<div class="b" style="left:814px;top:453px;width:1px;height:376px;background:#a8a8ae"></div>
<div class="b" style="left:859px;top:453px;width:1px;height:376px;background:#a8a8ae"></div>
<div class="b" style="left:904px;top:453px;width:1px;height:376px;background:#a8a8ae"></div>
<div class="b" style="left:949px;top:453px;width:1px;height:376px;background:#a8a8ae"></div>
<div class="b" style="left:994px;top:453px;width:1px;height:376px;background:#a8a8ae"></div>
<div class="b" style="left:1039px;top:453px;width:1px;height:376px;background:#a8a8ae"></div>
<div class="b" style="left:1095px;top:453px;width:1px;height:376px;background:#a8a8ae"></div>
<div class="b" style="left:1167px;top:453px;width:1px;height:376px;background:#a8a8ae"></div>
<div class="b" style="left:1239px;top:453px;width:1px;height:376px;background:#a8a8ae"></div>
<div class="b" style="left:1296px;top:453px;width:1px;height:376px;background:#a8a8ae"></div>
<div class="b" style="left:1316px;top:453px;width:1px;height:376px;background:#a8a8ae"></div>
<div class="b" style="left:179px;top:523px;width:508px;height:145px;box-sizing:border-box;border:2px solid #f00;box-shadow:2px 2px 4px rgba(0,0,0,.4), inset 2px 2px 3px rgba(0,0,0,.3)"></div>
</body></html>
